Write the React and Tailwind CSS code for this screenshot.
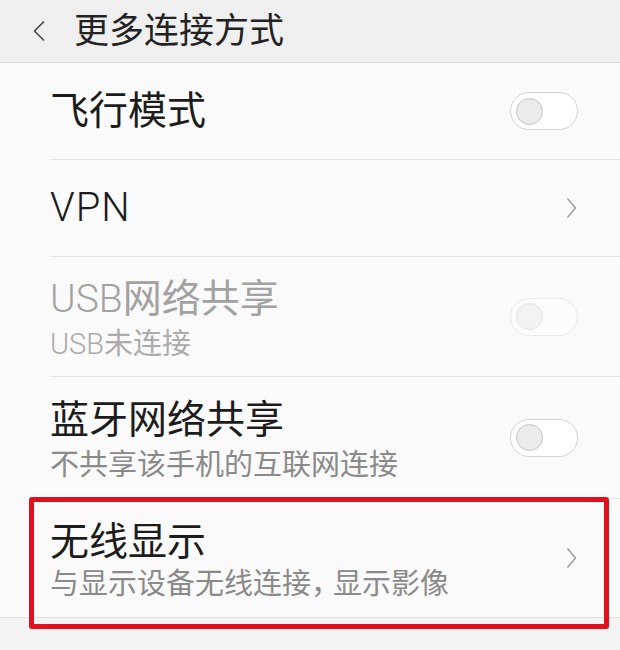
import React from "react";

const font = { fontFamily: '"Roboto", "Noto Sans CJK SC", sans-serif' };

function Toggle({ disabled }) {
  return (
    <div className={"relative w-[68px] h-[38px] rounded-full border border-[#d4d4d4] bg-white flex items-center pl-[5px] " + (disabled ? "opacity-40" : "")}>
      <div className="w-[27px] h-[27px] rounded-full bg-[#ebebeb] border border-[#c4c4c4]" />
    </div>
  );
}

function Chevron() {
  return (
    <svg width="11" height="22" viewBox="0 0 11 22" fill="none">
      <path d="M1.5 1.5 L9.5 11 L1.5 20.5" stroke="#9a9a9a" strokeWidth="1.4" strokeLinejoin="round" />
    </svg>
  );
}

export default function App() {
  return (
    <div className="w-[620px] min-h-[650px] bg-[#f3f3f3] overflow-hidden" style={font}>
      <div className="h-[63px] bg-[#efefef] border-b border-[#d9d9d9] flex items-center">
        <div className="w-[74px] flex justify-start pl-[32px]">
          <svg width="14" height="22" viewBox="0 0 14 22" fill="none">
            <path d="M12 1.5 L2.5 11 L12 20.5" stroke="#444" strokeWidth="1.6" strokeLinejoin="round" />
          </svg>
        </div>
        <span className="text-[35px] leading-none text-[#222]">更多连接方式</span>
      </div>

      <div className="bg-[#fafafa] border-b border-[#e2e2e2]">
        <div className="pl-[50px]">
          <div className="h-[97px] border-b border-[#e6e6e6] flex items-center justify-between pr-[42px]">
            <span className="text-[39px] leading-[48px] text-[#1c1c1c]">飞行模式</span>
            <Toggle />
          </div>
        </div>
        <div className="pl-[50px]">
          <div className="h-[97px] border-b border-[#e6e6e6] flex items-center justify-between pr-[43px]">
            <span className="text-[40px] leading-[48px] font-light text-[#1c1c1c] tracking-[1px]">VPN</span>
            <Chevron />
          </div>
        </div>
        <div className="pl-[50px]">
          <div className="h-[120px] border-b border-[#e6e6e6] flex items-center justify-between pr-[42px]">
            <div className="flex flex-col pt-[6px]">
              <span className="text-[39px] leading-[48px] text-[#a2a2a2]"><span className="font-light">USB</span>网络共享</span>
              <span className="text-[29px] leading-[42px] text-[#ababab]"><span className="font-light">USB</span>未连接</span>
            </div>
            <Toggle disabled />
          </div>
        </div>
        <div className="pl-[50px]">
          <div className="h-[122px] border-b border-[#e6e6e6] flex items-center justify-between pr-[42px]">
            <div className="flex flex-col pt-[6px]">
              <span className="text-[39px] leading-[48px] text-[#1c1c1c]">蓝牙网络共享</span>
              <span className="text-[29px] leading-[42px] text-[#8a8a8a]">不共享该手机的互联网连接</span>
            </div>
            <Toggle />
          </div>
        </div>
        <div className="relative pl-[50px]">
          <div className="h-[118px] flex items-center justify-between pr-[43px]">
            <div className="flex flex-col pt-[4px]">
              <span className="text-[39px] leading-[48px] text-[#1c1c1c]">无线显示</span>
              <span className="text-[29px] leading-[36px] text-[#8a8a8a]">与显示设备无线连接<span className="tracking-[-8px]">，</span><span className="pl-[1px]">显示影像</span></span>
            </div>
            <Chevron />
          </div>
          <div className="absolute z-10 top-[-2px] left-[29px] w-[580px] h-[132px] border-[5px] border-[#e0101e] rounded-[3px]" />
        </div>
      </div>
    </div>
  );
}
